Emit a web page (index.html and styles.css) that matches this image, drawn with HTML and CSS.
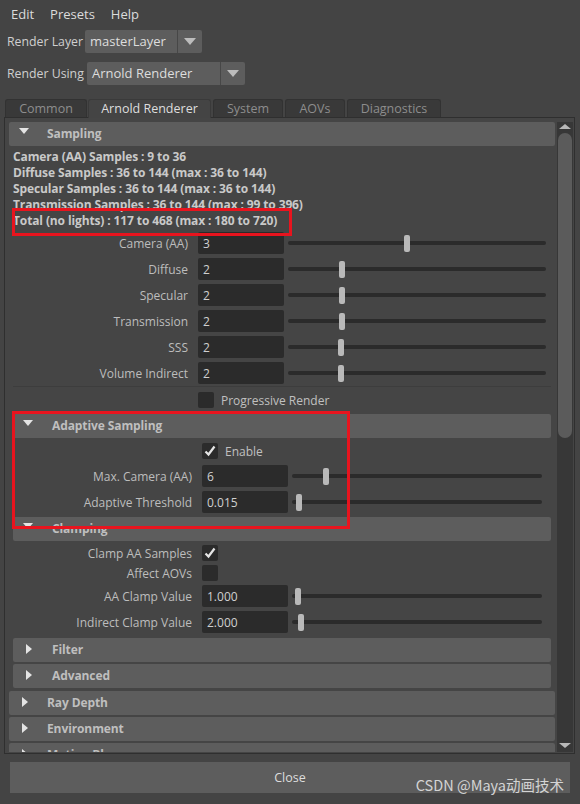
FILE: index.html
```html
<!DOCTYPE html>
<html>
<head>
<meta charset="utf-8">
<link rel="stylesheet" href="styles.css">
</head>
<body>
<div class="menubar"><span>Edit</span><span>Presets</span><span>Help</span></div>
<div class="toprow row1">
  <span class="toplabel">Render Layer</span>
  <div class="dropdown dd1"><span class="ddtext">masterLayer</span><span class="ddarrow"><i class="tri-down-s"></i></span></div>
</div>
<div class="toprow row2">
  <span class="toplabel">Render Using</span>
  <div class="dropdown dd2"><span class="ddtext">Arnold Renderer</span><span class="ddarrow"><i class="tri-down-s"></i></span></div>
</div>
<div class="tabs">
  <div class="tab t1">Common</div>
  <div class="tab t2 active">Arnold Renderer</div>
  <div class="tab t3">System</div>
  <div class="tab t4">AOVs</div>
  <div class="tab t5">Diagnostics</div>
</div>
<div class="panel">
  <div class="content">
    <div class="frame">
      <div class="fhead"><i class="tri-down"></i><span>Sampling</span></div>
      <div class="fbody">
        <div class="info">
          <div>Camera (AA) Samples : 9 to 36</div>
          <div>Diffuse Samples : 36 to 144 (max : 36 to 144)</div>
          <div>Specular Samples : 36 to 144 (max : 36 to 144)</div>
          <div>Transmission Samples : 36 to 144 (max : 99 to 396)</div>
          <div>Total (no lights) : 117 to 468 (max : 180 to 720)</div>
        </div>
        <div class="rows">
          <div class="arow"><span class="alabel">Camera (AA)</span><span class="field">3</span><div class="slider"><i class="thumb" style="left:46%"></i></div></div>
          <div class="arow"><span class="alabel">Diffuse</span><span class="field">2</span><div class="slider"><i class="thumb" style="left:21%"></i></div></div>
          <div class="arow"><span class="alabel">Specular</span><span class="field">2</span><div class="slider"><i class="thumb" style="left:21%"></i></div></div>
          <div class="arow"><span class="alabel">Transmission</span><span class="field">2</span><div class="slider"><i class="thumb" style="left:21%"></i></div></div>
          <div class="arow"><span class="alabel">SSS</span><span class="field">2</span><div class="slider"><i class="thumb" style="left:20.6%"></i></div></div>
          <div class="arow"><span class="alabel">Volume Indirect</span><span class="field">2</span><div class="slider"><i class="thumb" style="left:20.6%"></i></div></div>
        </div>
        <div class="sep"></div>
        <div class="cbrow prog"><span class="alabel"></span><span class="check"></span><span class="cbtext">Progressive Render</span></div>
        <div class="subs">
          <div class="frame sub">
            <div class="fhead"><i class="tri-down"></i><span>Adaptive Sampling</span></div>
            <div class="sbody adaptive">
              <div class="cbrow tall"><span class="alabel"></span><span class="check on"><svg viewBox="0 0 16 16" width="16" height="16"><path d="M3.5 8.5 L6.5 11.5 L12.5 3.5" fill="none" stroke="#e6e6e6" stroke-width="2.2"/></svg></span><span class="cbtext">Enable</span></div>
              <div class="arow gap3"><span class="alabel">Max. Camera (AA)</span><span class="field">6</span><div class="slider"><i class="thumb" style="left:13.6%"></i></div></div>
              <div class="arow"><span class="alabel">Adaptive Threshold</span><span class="field">0.015</span><div class="slider"><i class="thumb" style="left:2.8%"></i></div></div>
            </div>
          </div>
          <div class="frame sub">
            <div class="fhead"><i class="tri-down"></i><span>Clamping</span></div>
            <div class="sbody clamping">
              <div class="cbrow"><span class="alabel">Clamp AA Samples</span><span class="check on"><svg viewBox="0 0 16 16" width="16" height="16"><path d="M3.5 8.5 L6.5 11.5 L12.5 3.5" fill="none" stroke="#e6e6e6" stroke-width="2.2"/></svg></span></div>
              <div class="cbrow"><span class="alabel">Affect AOVs</span><span class="check"></span></div>
              <div class="arow gap2"><span class="alabel">AA Clamp Value</span><span class="field">1.000</span><div class="slider"><i class="thumb" style="left:2.4%"></i></div></div>
              <div class="arow"><span class="alabel">Indirect Clamp Value</span><span class="field">2.000</span><div class="slider"><i class="thumb" style="left:3.4%"></i></div></div>
            </div>
          </div>
          <div class="frame sub closed"><div class="fhead"><i class="tri-right"></i><span>Filter</span></div></div>
          <div class="frame sub closed"><div class="fhead"><i class="tri-right"></i><span>Advanced</span></div></div>
        </div>
      </div>
    </div>
    <div class="frame closed top"><div class="fhead"><i class="tri-right"></i><span>Ray Depth</span></div></div>
    <div class="frame closed top"><div class="fhead"><i class="tri-right"></i><span>Environment</span></div></div>
    <div class="frame closed top"><div class="fhead"><i class="tri-right"></i><span>Motion Blur</span></div></div>
  </div>
  <div class="scrollbar">
    <i class="sb-up"></i>
    <div class="sb-track"><div class="sb-thumb"></div></div>
    <i class="sb-down"></i>
  </div>
</div>
<div class="closebtn">Close</div>
<div class="redbox rb1"></div>
<div class="redbox rb2"></div>
<div class="watermark">CSDN @Maya动画技术</div>
</body>
</html>
```
FILE: styles.css
```css
html, body {
  margin: 0;
  padding: 0;
}
body {
  width: 580px;
  height: 804px;
  background: #444444;
  font-family: "Open Sans", "Noto Sans CJK SC", sans-serif;
  font-size: 12px;
  color: #bdbdbd;
  overflow: hidden;
  position: relative;
}
.menubar {
  display: flex;
  gap: 16px;
  height: 28px;
  align-items: center;
  padding-left: 11px;
  font-size: 13px;
  color: #dcdcdc;
}
.toprow {
  display: flex;
  align-items: center;
  padding-left: 7px;
  height: 23px;
  font-size: 13px;
  color: #cfcfcf;
}
.toplabel {
  white-space: nowrap;
  flex: none;
  font-size: 12.3px;
}
.row1 { margin-top: 2px; }
.row2 { margin-top: 9px; }
.row1 .toplabel { width: 78px; }
.row2 .toplabel { width: 80px; }
.dropdown {
  display: flex;
  height: 23px;
  background: #5d5d5d;
  border-radius: 2px;
  color: #dddddd;
  flex: none;
}
.dd1 { width: 117px; }
.dd2 { width: 158px; }
.ddtext {
  flex: 1;
  padding-left: 5px;
  line-height: 23px;
  white-space: nowrap;
}
.ddarrow {
  width: 24px;
  border-left: 1px solid #474747;
  display: flex;
  align-items: center;
  justify-content: center;
}
.tri-down-s {
  width: 0; height: 0;
  border-left: 6px solid transparent;
  border-right: 6px solid transparent;
  border-top: 7px solid #bcbcbc;
}
.tabs {
  display: flex;
  margin-top: 14px;
  padding-left: 5px;
  height: 18px;
  align-items: flex-end;
}
.tab {
  height: 18px;
  box-sizing: border-box;
  background: #393939;
  border: 1px solid #323232;
  border-bottom: none;
  border-radius: 3px 3px 0 0;
  color: #8d8d8d;
  text-align: center;
  line-height: 17px;
  font-size: 12.5px;
  margin-right: 2px;
}
.tab.active {
  background: #444444;
  color: #dedede;
  height: 19px;
  margin-bottom: -1px;
  position: relative;
  z-index: 2;
  border-color: #3a3a3a;
}
.t1 { width: 82px; margin-right: 1px; }
.t2 { width: 123px; }
.t3 { width: 70px; }
.t4 { width: 60px; }
.t5 { width: 94px; }
.panel {
  width: 571px;
  height: 637px;
  box-sizing: border-box;
  margin-left: 4px;
  border: 1px solid #2f2f2f;
  background: #454545;
  display: flex;
  padding: 4px 1px 0 4px;
  gap: 2px;
}
.content {
  width: 546px;
  height: 630px;
  overflow: hidden;
}
.fhead {
  height: 24px;
  background: #5d5d5d;
  border-radius: 2px;
  display: flex;
  align-items: center;
  position: relative;
  font-weight: 700;
  color: #bfbfbf;
  font-size: 12px;
}
.fhead span {
  position: absolute;
  left: 38px;
  top: 0;
  line-height: 24px;
  letter-spacing: -0.1px;
}
.tri-down {
  position: absolute;
  left: 10px;
  top: 6px;
  width: 0; height: 0;
  border-left: 5px solid transparent;
  border-right: 5px solid transparent;
  border-top: 6px solid #e4e4e4;
}
.tri-right {
  position: absolute;
  left: 13px;
  top: 6px;
  width: 0; height: 0;
  border-top: 5px solid transparent;
  border-bottom: 5px solid transparent;
  border-left: 6px solid #e4e4e4;
}
.sub .fhead span { left: 39px; }
.fbody {
  padding-bottom: 1px;
}
.info {
  margin-top: 3px;
  padding-left: 4px;
  line-height: 16px;
  font-weight: 700;
  color: #c9c9c9;
  white-space: nowrap;
  letter-spacing: -0.12px;
}
.rows {
  margin-top: 3px;
  display: flex;
  flex-direction: column;
  gap: 4px;
}
.arow {
  display: flex;
  align-items: center;
  height: 22px;
}
.alabel {
  width: 179px;
  text-align: right;
  margin-right: 10px;
  white-space: nowrap;
  flex: none;
}
.field {
  width: 86px;
  height: 22px;
  box-sizing: border-box;
  background: #2b2b2b;
  border-radius: 2px;
  color: #d0d0d0;
  padding-left: 5px;
  line-height: 24px;
  flex: none;
}
.slider {
  position: relative;
  width: 258px;
  height: 4px;
  margin-left: 4px;
  background: #2b2b2b;
  border-radius: 2px;
}
.sub .slider { width: 250px; }
.thumb {
  position: absolute;
  top: -6.5px;
  width: 6px;
  height: 17px;
  margin-left: -3px;
  background: #b9b9b9;
  border-radius: 2px;
}
.sep {
  margin: 2px 4px 0 4px;
  height: 1px;
  background: #3d3d3d;
}
.cbrow {
  display: flex;
  align-items: center;
  height: 20px;
}
.cbrow.prog { height: 22px; margin-top: 2px; }
.cbrow.tall { height: 22px; }
.check {
  width: 16px;
  height: 16px;
  background: #2b2b2b;
  border-radius: 2px;
  flex: none;
  display: block;
}
.check svg { display: block; }
.cbtext {
  margin-left: 7px;
  color: #c0c0c0;
}
.subs {
  margin-top: 3px;
  padding: 0 4px;
  display: flex;
  flex-direction: column;
}
.sbody.adaptive { padding: 2px 0 4px; }
.sbody.clamping { padding: 2px 0 4px; }
.sbody .arow + .arow { margin-top: 4px; }
.sbody .arow.gap3 { margin-top: 3px; }
.sbody .arow.gap2 { margin-top: 2px; }
.sub.closed { margin-top: 1px; }
.sub.closed + .sub.closed { margin-top: 2px; }
.frame.top { margin-top: 2px; }
.scrollbar {
  width: 16px;
  height: 630px;
  background: #373737;
  position: relative;
  display: flex;
  flex-direction: column;
  align-items: center;
}
.sb-up {
  margin-top: 2px;
  width: 0; height: 0;
  border-left: 6px solid transparent;
  border-right: 6px solid transparent;
  border-bottom: 5px solid #b8b8b8;
}
.sb-track {
  flex: 1;
  width: 14px;
  padding-top: 4px;
}
.sb-thumb {
  width: 14px;
  height: 305px;
  background: #5b5b5b;
  border-radius: 7px;
}
.sb-down {
  margin-bottom: 4px;
  width: 0; height: 0;
  border-left: 6px solid transparent;
  border-right: 6px solid transparent;
  border-top: 5px solid #b8b8b8;
}
.closebtn {
  margin: 8px 0 0 10px;
  width: 560px;
  height: 31px;
  background: #5d5d5d;
  color: #dddddd;
  text-align: center;
  line-height: 31px;
  font-size: 12.5px;
}
.redbox {
  position: absolute;
  border: 3px solid #e8141e;
  box-sizing: border-box;
  pointer-events: none;
}
.rb1 { left: 12px; top: 208px; width: 280px; height: 28px; }
.rb2 { left: 12px; top: 411px; width: 338px; height: 118px; }
.watermark {
  position: absolute;
  right: 16px;
  top: 775px;
  font-family: "Noto Sans CJK SC", "Open Sans", sans-serif;
  font-size: 14.5px;
  color: rgba(235, 235, 235, 0.85);
  line-height: 20px;
  white-space: nowrap;
}
```
